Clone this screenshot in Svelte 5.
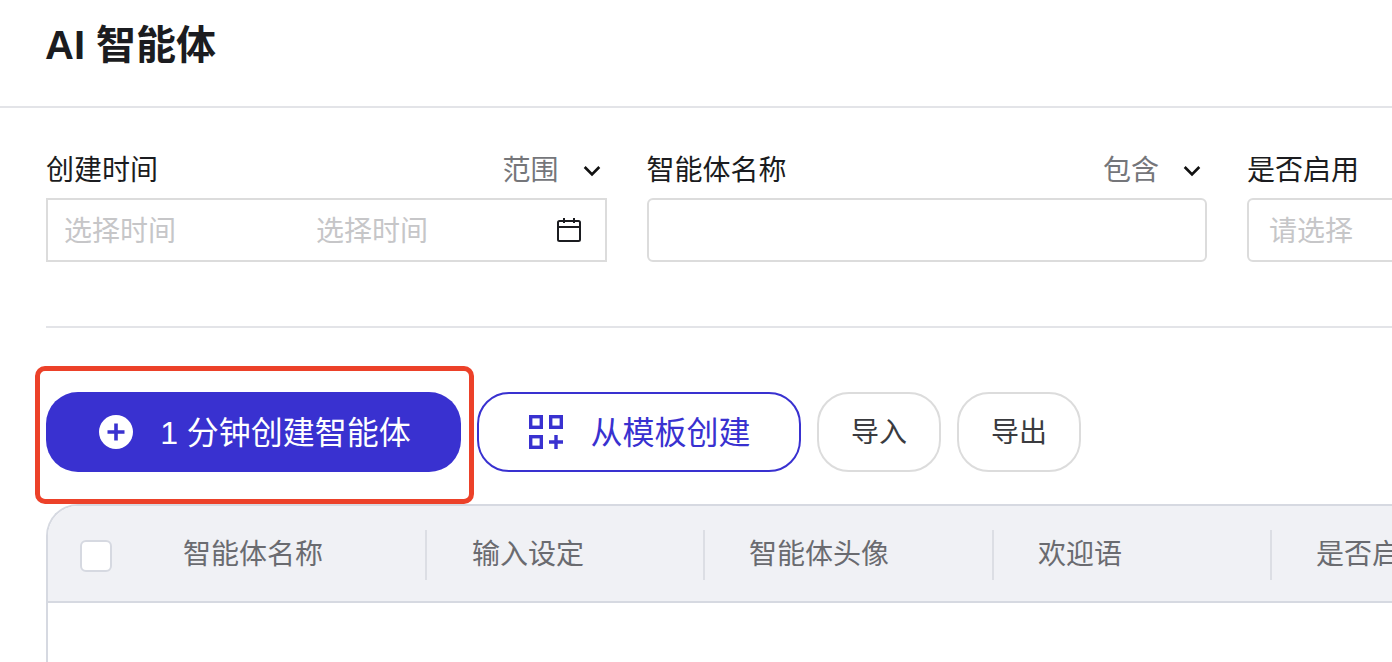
<script lang="ts">
	// Table columns, widths include the divider on the right
	const columns = [
		{ name: '智能体名称', width: 244 },
		{ name: '输入设定', width: 278 },
		{ name: '智能体头像', width: 289 },
		{ name: '欢迎语', width: 278 },
		{ name: '是否启用', width: 200 }
	];
</script>

<div class="page">
	<header class="page-header">
		<h1>AI 智能体</h1>
	</header>

	<section class="filters">
		<div class="field">
			<div class="field-label">
				<span>创建时间</span>
				<span class="mode">
					范围
					<svg class="chevron" viewBox="0 0 16 10" fill="none">
						<path d="M1.5 1.5 8 8l6.5-6.5" stroke="currentColor" stroke-width="2.4" />
					</svg>
				</span>
			</div>
			<div class="input date-range">
				<span class="placeholder date-part">选择时间</span>
				<span class="placeholder">选择时间</span>
				<svg class="calendar" viewBox="0 0 24 26" fill="none">
					<rect x="1" y="4" width="22" height="20" rx="1.5" stroke="currentColor" stroke-width="2" />
					<path d="M1 10h22M7 1v5M17 1v5" stroke="currentColor" stroke-width="2" />
				</svg>
			</div>
		</div>

		<div class="field">
			<div class="field-label">
				<span>智能体名称</span>
				<span class="mode">
					包含
					<svg class="chevron" viewBox="0 0 16 10" fill="none">
						<path d="M1.5 1.5 8 8l6.5-6.5" stroke="currentColor" stroke-width="2.4" />
					</svg>
				</span>
			</div>
			<div class="input rounded"></div>
		</div>

		<div class="field">
			<div class="field-label">
				<span>是否启用</span>
			</div>
			<div class="input rounded">
				<span class="placeholder">请选择</span>
			</div>
		</div>
	</section>

	<section class="actions">
		<div class="primary-wrap">
			<button class="btn primary">
				<svg class="btn-icon" viewBox="0 0 34 34">
					<circle cx="17" cy="17" r="17" fill="#fff" />
					<path d="M17 8.500v17M8.500 17h17" stroke="#3931d0" stroke-width="3.6" />
				</svg>
				<span class="btn-text">1 分钟创建智能体</span>
			</button>
		</div>
		<button class="btn outline">
			<svg class="btn-icon" viewBox="0 0 34 34" fill="none" stroke="currentColor" stroke-width="3.4">
				<rect x="1.700" y="1.700" width="10.600" height="10.600" />
				<rect x="21.700" y="1.700" width="10.600" height="10.600" />
				<rect x="1.700" y="21.700" width="10.600" height="10.600" />
				<path d="M27 20v14M20 27h14" />
			</svg>
			<span class="btn-text">从模板创建</span>
		</button>
		<button class="btn plain"><span class="btn-text">导入</span></button>
		<button class="btn plain"><span class="btn-text">导出</span></button>
	</section>

	<section class="table">
		<div class="table-head">
			<span class="check-cell"><span class="checkbox"></span></span>
			{#each columns as col}
				<span class="th" style="width: {col.width}px">{col.name}</span>
			{/each}
		</div>
	</section>
</div>

<style>
	:global(body) {
		margin: 0;
		background: #fff;
		overflow: hidden;
	}

	.page {
		width: 1392px;
		height: 662px;
		overflow: hidden;
		font-family: 'Liberation Sans', 'Noto Sans CJK SC', sans-serif;
		color: #1b1c20;
	}

	.page-header {
		height: 106px;
		border-bottom: 2px solid #e3e4e8;
		padding-left: 45px;
		display: flex;
		align-items: flex-start;
	}

	h1 {
		margin: 20px 0 0;
		font-size: 40px;
		line-height: 50px;
		font-weight: 700;
	}

	.filters {
		margin-left: 46px;
		border-bottom: 2px solid #e3e4e8;
		box-sizing: border-box;
		padding-top: 44px;
		height: 220px;
		display: flex;
		gap: 40px;
	}

	.field {
		flex: 0 0 560.5px;
		min-width: 0;
	}

	.field-label {
		display: flex;
		justify-content: space-between;
		align-items: center;
		height: 46px;
		box-sizing: border-box;
		padding-bottom: 8px;
		font-size: 28px;
		line-height: 36px;
	}

	.mode {
		display: flex;
		align-items: center;
		gap: 24px;
		color: #75767a;
		padding-right: 6px;
	}

	.chevron {
		width: 18px;
		height: 12px;
		color: #111;
	}

	.input {
		height: 64px;
		box-sizing: border-box;
		border: 2px solid #dcdcdc;
		display: flex;
		align-items: center;
		padding: 0 20px 2px;
		font-size: 28px;
	}

	.rounded {
		border-radius: 6px;
	}

	.date-range {
		padding-left: 16px;
		padding-right: 24px;
	}

	.date-part {
		width: 252px;
		flex-shrink: 0;
	}

	.calendar {
		margin-left: auto;
		margin-top: 2px;
		width: 24px;
		height: 26px;
		color: #1b1c20;
	}

	.placeholder {
		color: #c6c6c8;
	}

	.actions {
		margin-left: 46px;
		padding-top: 64px;
		display: flex;
		gap: 16px;
	}

	/* red highlight round the first button */
	.primary-wrap {
		position: relative;
	}

	.primary-wrap::after {
		content: '';
		position: absolute;
		left: -11px;
		top: -26px;
		width: 439px;
		height: 138px;
		box-sizing: border-box;
		border: 5px solid #ec4129;
		border-radius: 10px;
		pointer-events: none;
	}

	.btn {
		height: 80px;
		border-radius: 32px;
		box-sizing: border-box;
		font: inherit;
		font-size: 32px;
		display: flex;
		align-items: center;
		justify-content: center;
		padding: 0;
		background: #fff;
	}

	.btn-text {
		padding-bottom: 4px;
	}

	.primary {
		width: 415px;
		padding-left: 3px;
		background: #3931d0;
		border: none;
		color: #fff;
		gap: 27px;
	}

	.outline {
		width: 324px;
		padding-left: 2px;
		border: 2px solid #3931d0;
		color: #3931d0;
		gap: 27px;
	}

	.btn-icon {
		width: 34px;
		height: 34px;
		flex-shrink: 0;
	}

	.plain {
		width: 124px;
		border: 2px solid #dcdcdc;
		color: #3a3b3f;
		font-size: 28px;
	}

	.table {
		margin-left: 46px;
		margin-top: 32px;
		height: 200px;
		border: 2px solid #d6d9e1;
		border-right: none;
		border-bottom: none;
		border-top-left-radius: 32px;
		overflow: hidden;
	}

	.table-head {
		height: 97px;
		box-sizing: border-box;
		padding-top: 2px;
		background: #f0f1f5;
		border-bottom: 2px solid #d6d9e1;
		display: flex;
		align-items: center;
		white-space: nowrap;
	}

	.check-cell {
		width: 135px;
		flex-shrink: 0;
		box-sizing: border-box;
		padding-left: 32px;
		display: flex;
	}

	.checkbox {
		width: 32px;
		height: 32px;
		margin-top: 3px;
		box-sizing: border-box;
		background: #fff;
		border: 2px solid #d6d9e1;
		border-radius: 6px;
	}

	.th {
		flex-shrink: 0;
		box-sizing: border-box;
		height: 50px;
		line-height: 50px;
		padding-left: 44px;
		font-size: 28px;
		color: #6a6b70;
		border-right: 2px solid #dcdee4;
	}

	.check-cell + .th {
		padding-left: 0;
	}

	.th:nth-child(3) {
		padding-left: 45px;
	}
</style>
